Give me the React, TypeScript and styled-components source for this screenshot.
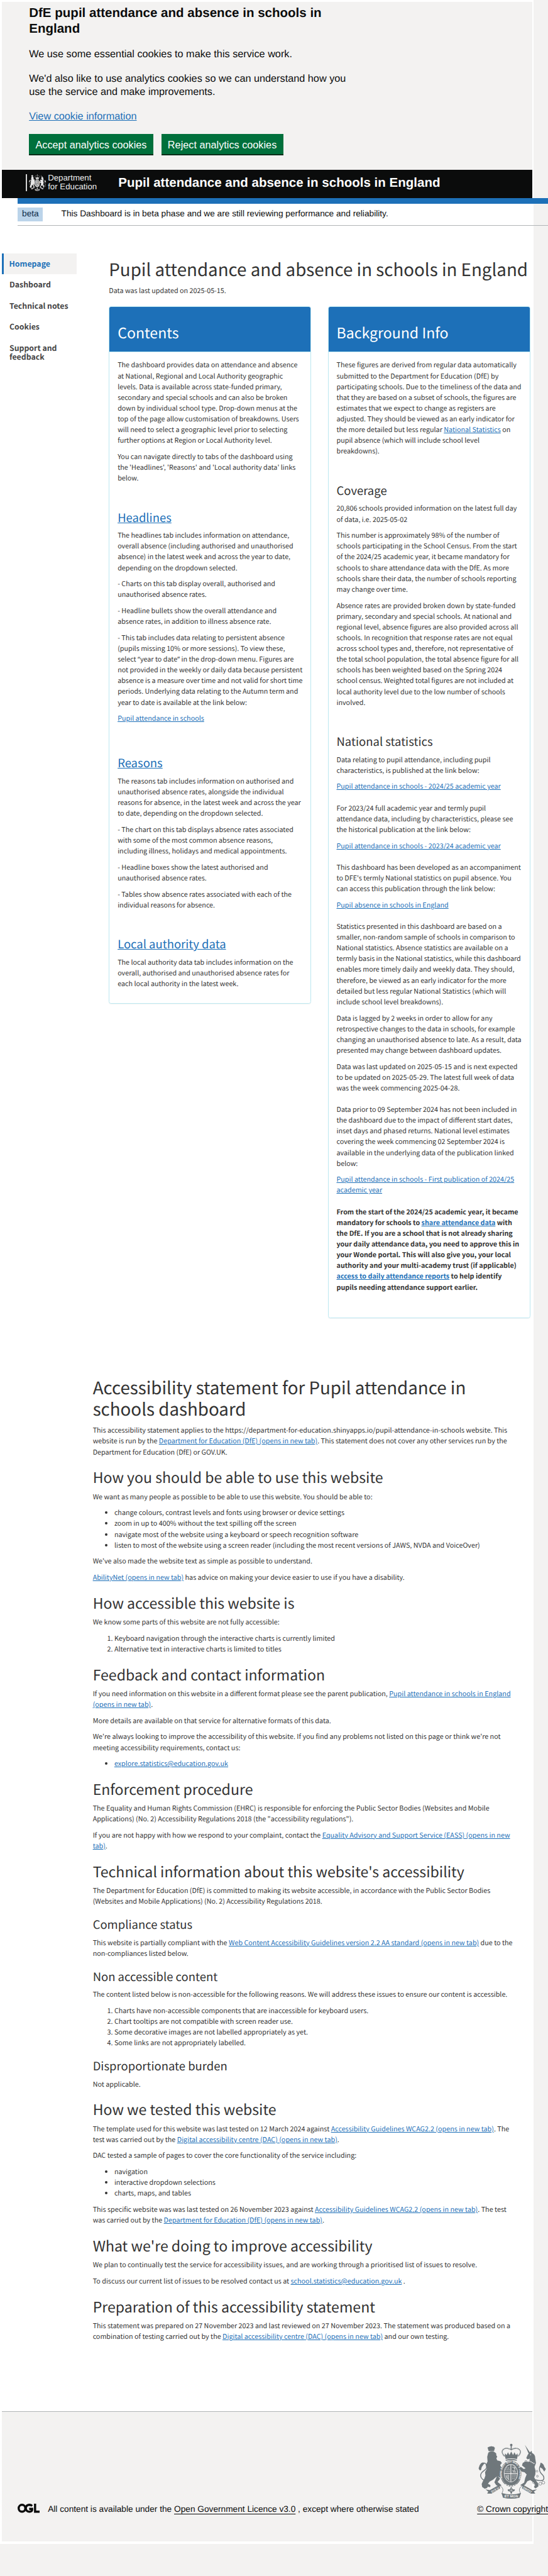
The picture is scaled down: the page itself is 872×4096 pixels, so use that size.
import React, { useId } from 'react';
import styled, { createGlobalStyle, css } from 'styled-components';

const SOURCE = `'Noto Sans CJK SC', 'Noto Sans', sans-serif`;
const ARIAL = `'Liberation Sans', Arial, sans-serif`;
const size = (px: number) => `${(px * 0.009).toFixed(4)}rem`;

// 1rem stands for 100 design units
const GlobalStyle = createGlobalStyle`
  html { font-size: 85.6px; }
  html, body { margin: 0; padding: 0; background: #f3f2f1; overflow-x: hidden; }
  * { box-sizing: border-box; }
`;

const Page = styled.div`
  width: 872px;
  height: 4096px;
  overflow: hidden;
  background: #f3f2f1;
  color: #333333;
  font-family: ${SOURCE};
  font-size: ${size(14)};
  line-height: 0.2rem;
  text-rendering: geometricPrecision;
`;

const Sheet = styled.div`
  width: 9.92rem;
  height: 47.25rem;
  padding: 0.03rem;
  background: #ffffff;
`;

const CookieBanner = styled.section`
  height: 3.12rem;
  padding: 0.06rem 0.51rem 0;
  background: #f3f2f1;
  color: #0b0c0c;
  font: 0.19rem/0.25rem ${ARIAL};
`;

const BannerTitle = styled.h2`
  width: 6rem;
  margin: 0 0 0.2rem;
  font: bold 0.24rem/0.3rem ${ARIAL};
`;

const BannerText = styled.p`
  width: 6rem;
  margin: 0 0 0.2rem;
`;

const Link = styled.a`
  color: #1d70b8;
  text-decoration: underline;
`;

const ButtonRow = styled.div`
  display: flex;
  gap: 0.15rem;
  margin-top: 0.2rem;
`;

const GreenButton = styled.button`
  height: 0.4rem;
  padding: 0 0.12rem 0.01rem;
  border: 0;
  background: #00703c;
  box-shadow: inset 0 -2px 0 #002d18;
  color: #ffffff;
  font: 0.19rem/0.19rem ${ARIAL};
  white-space: nowrap;
`;

const Header = styled.header`
  display: flex;
  height: 0.53rem;
  padding: 0.09rem 0 0 0.45rem;
  background: #0b0c0c;
  color: #ffffff;
`;

const LogoBar = styled.div`
  width: 0.02rem;
  height: 0.31rem;
  margin-right: 0.04rem;
  background: #d5d5d5;
`;

const CrestSvg = styled.svg<{ $w: number; $h: number }>`
  display: block;
  flex: none;
  width: ${(p) => p.$w}rem;
  height: ${(p) => p.$h}rem;
`;

const LogoText = styled.div`
  width: 1.31rem;
  margin: -0.02rem 0 0 0.03rem;
  font: 0.155rem/0.17rem ${ARIAL};
  color: #f0f0f0;
  white-space: nowrap;
`;

const HeaderTitle = styled.div`
  padding-top: 0.01rem;
  font: bold 0.24rem/0.3rem ${ARIAL};
  white-space: nowrap;
`;

const BlueBand = styled.div`
  width: 9.9rem;
  height: 0.1rem;
  margin-left: 0.3rem;
  background: #1d70b8;
`;

const PhaseBanner = styled.div`
  display: flex;
  width: 9.9rem;
  height: 0.41rem;
  margin-left: 0.3rem;
  padding-top: 0.08rem;
  border-bottom: 1px solid #b1b4b6;
  color: #0b0c0c;
  font: 0.16rem/0.24rem ${ARIAL};
`;

const Tag = styled.strong`
  width: 0.47rem;
  height: 0.25rem;
  margin-right: 0.34rem;
  background: #bbd4ea;
  color: #0c2d4a;
  font-weight: 400;
  text-align: center;
`;

const Body = styled.div`
  display: flex;
  height: 21.195rem;
  padding-top: 0.52rem;
`;

const Nav = styled.nav`
  width: 1.39rem;
  margin-right: 0.605rem;
`;

const NavItem = styled.a<{ $active?: boolean }>`
  display: block;
  min-height: 0.38rem;
  margin-bottom: 0.01rem;
  padding: 0.105rem 0.1rem 0.105rem 0.145rem;
  color: #444444;
  font-size: ${size(16)};
  font-weight: 700;
  line-height: 0.17rem;
  ${(p) =>
    p.$active &&
    css`
      padding-left: 0.105rem;
      border-left: 0.04rem solid #1d70b8;
      background: #f3f2f1;
      color: #1d70b8;
    `}
`;

const Main = styled.main`
  width: 7.83rem;
  padding-top: 0.09rem;
`;

const PageTitle = styled.h1`
  margin: 0 0 0.105rem;
  font-size: ${size(36)};
  font-weight: 400;
  line-height: 0.396rem;
  white-space: nowrap;
`;

const H1 = styled.h1`
  margin: 0.19rem 0 0.11rem;
  font-size: ${size(36)};
  font-weight: 400;
  line-height: 0.396rem;
  white-space: nowrap;
`;

const H2 = styled.h2`
  margin: 0.193rem 0 0.107rem;
  font-size: ${size(30)};
  font-weight: 400;
  line-height: 0.33rem;
`;

const H3 = styled.h3`
  margin: 0.196rem 0 0.104rem;
  font-size: ${size(24)};
  font-weight: 400;
  line-height: 0.264rem;
`;

const P = styled.p`
  margin: 0 0 0.1rem;
  white-space: nowrap;
`;

const Notice = styled(P)`
  font-weight: 700;
`;

const Quote = styled.span`
  font-family: 'Noto Sans', sans-serif;
`;

const Gap = styled.div<{ $h: number }>`
  height: ${(p) => p.$h / 100}rem;
`;

const Cards = styled.div`
  display: flex;
  align-items: flex-start;
  gap: 0.31rem;
  margin-top: 0.19rem;
`;

const Card = styled.section`
  width: 3.76rem;
  border: 1px solid #bce8f1;
  border-radius: 0.04rem;
  box-shadow: 0 1px 1px rgba(0, 0, 0, 0.05);
`;

const CardHead = styled.header`
  height: 0.84rem;
  padding: 0.3rem 0.15rem 0;
  border-bottom: 1px solid #bce8f1;
  border-radius: 0.03rem 0.03rem 0 0;
  background: #1d70b8;
  color: #ffffff;
  font-size: ${size(30)};
  line-height: 0.33rem;
`;

const CardBody = styled.div`
  padding: 0.145rem 0.11rem 0.155rem 0.15rem;
`;

const Statement = styled.article`
  width: 7.86rem;
  height: 19.215rem;
  margin-left: 1.695rem;
  ul, ol { margin: 0 0 0.1rem; padding-left: 0.4rem; }
`;

const Footer = styled.footer`
  height: 2.42rem;
  padding-left: 0.3rem;
  border-top: 1px solid #b1b4b6;
  background: #f3f2f1;
  color: #0b0c0c;
  font: 0.16rem/0.2rem ${ARIAL};
  white-space: nowrap;
`;

const FooterRow = styled.div`
  display: flex;
  align-items: flex-end;
  width: 9.9rem;
  height: 1.91rem;
`;

const LicenceText = styled.div`
  width: 7.98rem;
  margin-left: 0.15rem;
`;

const FooterLink = styled.a`
  text-decoration: underline;
  text-underline-offset: 0.03rem;
`;

const Copyright = styled.div`
  width: 1.33rem;
  ${CrestSvg} { margin: 0 0 0.09rem 0.02rem; }
`;

const OglSvg = styled.svg`
  flex: none;
  width: 0.41rem;
  height: 0.17rem;
  margin-bottom: 0.03rem;
`;

const Crest = ({ w, h, color, back }: { w: number; h: number; color: string; back: string }) => {
  const garter = useId();
  return (
    <CrestSvg $w={w} $h={h} viewBox="28 28 378 310" preserveAspectRatio="none" fill={color}>
      {/* crowned lion */}
      <path d="M86 72 L80 52 Q90 44 100 46 L100 42 L104 46 Q116 44 121 54 L116 72 Z" />
      <path d="M84 80 Q100 68 118 76 L128 84 L129 96 L134 103 L129 112 L134 124 L152 128 L160 138 L150 150 L158 164 L150 196 L154 222 L136 212 L126 218 L110 232 L92 242 L82 254 L96 262 L95 273 L80 271 L78 278 L64 282 L50 272 L47 256 L54 240 L62 226 L68 208 L66 190 L76 170 L70 150 L80 130 L78 104 Z" />
      <path d="M134 208 L150 226 L136 244 L146 252 L158 264 L142 270 L128 262 L118 246 Z" />
      <path d="M66 238 Q36 222 42 202 Q46 190 64 178 Q82 164 72 146 Q64 134 54 142 Q38 152 42 176" fill="none" stroke={color} strokeWidth="5" />
      <path d="M64 138 Q48 128 36 150 L30 168 Q34 182 42 178 L48 160 Z" />
      {/* crown */}
      <circle cx="212" cy="38" r="7" />
      <path d="M209 42 h6 v24 h-6 z" />
      <path d="M174 100 Q154 78 166 64 Q182 48 212 64 Q242 48 258 64 Q272 78 250 100" fill="none" stroke={color} strokeWidth="6" strokeDasharray="6 2" />
      <path d="M176 98 L178 84 L186 94 L194 78 L202 94 L212 74 L222 94 L230 78 L238 94 L247 84 L248 98 L244 116 Q212 108 181 116 Z" />
      <path d="M180 120 Q212 112 244 120 L242 126 Q212 118 182 126 Z" />
      {/* shield inside the garter */}
      <ellipse cx="210" cy="197" rx="59" ry="73" />
      <ellipse cx="210" cy="197" rx="54" ry="68" fill="none" stroke={back} strokeWidth="1.5" />
      <ellipse cx="210" cy="195" rx="39" ry="50" fill={back} />
      <ellipse cx="210" cy="195" rx="36" ry="47" />
      <path d="M210 148 v94 M174 197 h72" stroke={back} strokeWidth="4" />
      <g fill="none" stroke={back} strokeWidth="3">
        <path d="M184 166 h20 M180 176 h24 M180 186 h24" strokeDasharray="6 3" />
        <path d="M218 206 h24 M218 216 h22 M218 226 h14" strokeDasharray="6 3" />
        <path d="M218 162 h14 v20 h-14 M226 170 l10 -6 M222 188 h18" />
        <path d="M182 206 Q184 224 202 234 M190 204 v20 M198 204 v26" />
      </g>
      <path id={garter} d="M162 222 Q150 175 180 147 Q212 122 242 150 Q268 180 252 230" fill="none" />
      <text fontFamily={ARIAL} fontSize="15" fontWeight="700" fill={back}>
        <textPath href={`#${garter}`} textLength="232">HONI SOIT QUI MAL Y PENSE</textPath>
      </text>
      <path d="M178 258 Q210 276 244 258" fill="none" stroke={back} strokeWidth="5" strokeDasharray="8 7" />
      {/* unicorn */}
      <path d="M288 37 L318 82 L310 88 Z" />
      <path d="M314 80 L326 70 L328 82 Q346 90 346 112 L350 138 L342 160 L348 182 L346 204 L340 218 L350 236 L362 252 L364 268 L348 280 L338 272 L346 262 L336 246 L318 234 L302 240 L290 258 L276 268 L262 262 L284 248 L290 222 L298 202 L286 190 L270 186 L256 168 L266 160 L282 172 L292 168 L272 152 L276 138 L290 130 L310 132 L316 114 L302 118 L296 110 L304 92 Z" />
      <path d="M304 122 L342 142" stroke={back} strokeWidth="5" strokeDasharray="6 3" />
      <circle cx="320" cy="92" r="2.5" fill={back} />
      <path d="M346 232 Q390 244 394 226 Q396 212 382 200 Q366 184 370 164 Q376 142 390 158" fill="none" stroke={color} strokeWidth="5" />
      <path d="M376 136 Q394 142 396 158 L405 172 L396 186 L386 170 L370 160 Z" />
      <g fill="none" stroke={color} strokeWidth="2.5">
        <circle cx="294" cy="130" r="6" />
        <circle cx="356" cy="184" r="5" />
        <circle cx="358" cy="212" r="5" />
        <circle cx="337" cy="247" r="6" />
        <circle cx="350" cy="261" r="7" />
        <circle cx="374" cy="254" r="8" />
        <circle cx="391" cy="248" r="8" />
      </g>
      {/* motto ribbon and plant */}
      <path d="M68 286 L92 290 L146 260 L150 280 L102 309 L78 309 L84 298 Z" />
      <path d="M356 286 L330 290 L278 260 L272 280 L322 309 L346 309 L338 298 Z" />
      <path d="M150 266 Q174 280 162 304 L160 312 M274 266 Q248 280 262 304 L264 312" fill="none" stroke={color} strokeWidth="3" />
      <path d="M158 306 Q212 322 266 306 L258 332 Q212 343 166 332 Z" />
      <path d="M212 270 L220 286 L232 286 Q234 298 218 298 L215 310 H209 L206 298 Q190 298 193 286 L204 286 Z" />
      <path d="M212 278 v20 M202 292 h20" stroke={back} strokeWidth="2" />
      <g fontFamily={ARIAL} fontSize="19" fontWeight="700" fill={back}>
        <text x="174" y="332" textLength="76">ET MON</text>
        <text transform="translate(104 306) rotate(-31)" fontSize="17" textLength="48">DIEU</text>
        <text transform="translate(276 280) rotate(31)" fontSize="17" textLength="54">DROIT</text>
      </g>
    </CrestSvg>
  );
};

const OglMark = () => (
  <OglSvg viewBox="0 0 41 17">
    <g fill="none" stroke="#0b0c0c" strokeWidth="4">
      <ellipse cx="8.2" cy="8.5" rx="6.2" ry="6.5" />
      <path d="M27 4.2 Q25 2 21.5 2 Q15.5 2.5 15.3 8.5 Q15.5 14.5 21.5 15 Q26 15 27 12 V9.6 H21.5" />
      <path d="M32.5 0 V15 H41" />
    </g>
  </OglSvg>
);

export default function App() {
  return (
    <>
      <GlobalStyle />
      <Page>
        <Sheet>
          <CookieBanner>
            <BannerTitle>DfE pupil attendance and absence in schools in England</BannerTitle>
            <BannerText>We use some essential cookies to make this service work.</BannerText>
            <BannerText>We'd also like to use analytics cookies so we can understand how you use the service and make improvements.</BannerText>
            <Link>View cookie information</Link>
            <ButtonRow>
              <GreenButton>Accept analytics cookies</GreenButton>
              <GreenButton>Reject analytics cookies</GreenButton>
            </ButtonRow>
          </CookieBanner>
          <Header>
            <LogoBar />
            <Crest w={0.32} h={0.31} color="#e8e8e8" back="#0b0c0c" />
            <LogoText>Department<br />for Education</LogoText>
            <HeaderTitle>Pupil attendance and absence in schools in England</HeaderTitle>
          </Header>
          <BlueBand />
          <PhaseBanner>
            <Tag>beta</Tag>
            <span>This Dashboard is in beta phase and we are still reviewing performance and reliability.</span>
          </PhaseBanner>
          <Body>
            <Nav>
              <NavItem $active>Homepage</NavItem>
              <NavItem>Dashboard</NavItem>
              <NavItem>Technical notes</NavItem>
              <NavItem>Cookies</NavItem>
              <NavItem>Support and<br />feedback</NavItem>
            </Nav>
            <Main>
              <PageTitle>Pupil attendance and absence in schools in England</PageTitle>
              <P>Data was last updated on 2025-05-15.</P>
              <Cards>
                <Card>
                  <CardHead>Contents</CardHead>
                  <CardBody>
                    <P>
                      The dashboard provides data on attendance and absence<br />
                      at National, Regional and Local Authority geographic<br />
                      levels. Data is available across state-funded primary,<br />
                      secondary and special schools and can also be broken<br />
                      down by individual school type. Drop-down menus at the<br />
                      top of the page allow customisation of breakdowns. Users<br />
                      will need to select a geographic level prior to selecting<br />
                      further options at Region or Local Authority level.
                    </P>
                    <P>
                      You can navigate directly to tabs of the dashboard using<br />
                      the 'Headlines', 'Reasons' and 'Local authority data' links<br />
                      below.
                    </P>
                    <Gap $h={20} />
                    <H3><Link>Headlines</Link></H3>
                    <P>
                      The headlines tab includes information on attendance,<br />
                      overall absence (including authorised and unauthorised<br />
                      absence) in the latest week and across the year to date,<br />
                      depending on the dropdown selected.
                    </P>
                    <P>
                      - Charts on this tab display overall, authorised and<br />
                      unauthorised absence rates.
                    </P>
                    <P>
                      - Headline bullets show the overall attendance and<br />
                      absence rates, in addition to illness absence rate.
                    </P>
                    <P>
                      - This tab includes data relating to persistent absence<br />
                      (pupils missing 10% or more sessions). To view these,<br />
                      select <Quote>“</Quote>year to date<Quote>”</Quote> in the drop-down menu. Figures are<br />
                      not provided in the weekly or daily data because persistent<br />
                      absence is a measure over time and not valid for short time<br />
                      periods. Underlying data relating to the Autumn term and<br />
                      year to date is available at the link below:
                    </P>
                    <P><Link>Pupil attendance in schools</Link></P>
                    <Gap $h={30} />
                    <H3><Link>Reasons</Link></H3>
                    <P>
                      The reasons tab includes information on authorised and<br />
                      unauthorised absence rates, alongside the individual<br />
                      reasons for absence, in the latest week and across the year<br />
                      to date, depending on the dropdown selected.
                    </P>
                    <P>
                      - The chart on this tab displays absence rates associated<br />
                      with some of the most common absence reasons,<br />
                      including illness, holidays and medical appointments.
                    </P>
                    <P>
                      - Headline boxes show the latest authorised and<br />
                      unauthorised absence rates.
                    </P>
                    <P>
                      - Tables show absence rates associated with each of the<br />
                      individual reasons for absence.
                    </P>
                    <Gap $h={20} />
                    <H3><Link>Local authority data</Link></H3>
                    <P>
                      The local authority data tab includes information on the<br />
                      overall, authorised and unauthorised absence rates for<br />
                      each local authority in the latest week.
                    </P>
                  </CardBody>
                </Card>
                <Card>
                  <CardHead>Background Info</CardHead>
                  <CardBody>
                    <P>
                      These figures are derived from regular data automatically<br />
                      submitted to the Department for Education (DfE) by<br />
                      participating schools. Due to the timeliness of the data and<br />
                      that they are based on a subset of schools, the figures are<br />
                      estimates that we expect to change as registers are<br />
                      adjusted. They should be viewed as an early indicator for<br />
                      the more detailed but less regular <Link>National Statistics</Link> on<br />
                      pupil absence (which will include school level<br />
                      breakdowns).
                    </P>
                    <Gap $h={20} />
                    <H3>Coverage</H3>
                    <P>
                      20,806 schools provided information on the latest full day<br />
                      of data, i.e. 2025-05-02
                    </P>
                    <P>
                      This number is approximately 98% of the number of<br />
                      schools participating in the School Census. From the start<br />
                      of the 2024/25 academic year, it became mandatory for<br />
                      schools to share attendance data with the DfE. As more<br />
                      schools share their data, the number of schools reporting<br />
                      may change over time.
                    </P>
                    <P>
                      Absence rates are provided broken down by state-funded<br />
                      primary, secondary and special schools. At national and<br />
                      regional level, absence figures are also provided across all<br />
                      schools. In recognition that response rates are not equal<br />
                      across school types and, therefore, not representative of<br />
                      the total school population, the total absence figure for all<br />
                      schools has been weighted based on the Spring 2024<br />
                      school census. Weighted total figures are not included at<br />
                      local authority level due to the low number of schools<br />
                      involved.
                    </P>
                    <Gap $h={20} />
                    <H3>National statistics</H3>
                    <P>
                      Data relating to pupil attendance, including pupil<br />
                      characteristics, is published at the link below:
                    </P>
                    <P><Link>Pupil attendance in schools - 2024/25 academic year</Link></P>
                    <Gap $h={10} />
                    <P>
                      For 2023/24 full academic year and termly pupil<br />
                      attendance data, including by characteristics, please see<br />
                      the historical publication at the link below:
                    </P>
                    <P><Link>Pupil attendance in schools - 2023/24 academic year</Link></P>
                    <Gap $h={10} />
                    <P>
                      This dashboard has been developed as an accompaniment<br />
                      to DFE's termly National statistics on pupil absence. You<br />
                      can access this publication through the link below:
                    </P>
                    <P><Link>Pupil absence in schools in England</Link></P>
                    <Gap $h={10} />
                    <P>
                      Statistics presented in this dashboard are based on a<br />
                      smaller, non-random sample of schools in comparison to<br />
                      National statistics. Absence statistics are available on a<br />
                      termly basis in the National statistics, while this dashboard<br />
                      enables more timely daily and weekly data. They should,<br />
                      therefore, be viewed as an early indicator for the more<br />
                      detailed but less regular National Statistics (which will<br />
                      include school level breakdowns).
                    </P>
                    <P>
                      Data is lagged by 2 weeks in order to allow for any<br />
                      retrospective changes to the data in schools, for example<br />
                      changing an unauthorised absence to late. As a result, data<br />
                      presented may change between dashboard updates.
                    </P>
                    <P>
                      Data was last updated on 2025-05-15 and is next expected<br />
                      to be updated on 2025-05-29. The latest full week of data<br />
                      was the week commencing 2025-04-28.
                    </P>
                    <Gap $h={10} />
                    <P>
                      Data prior to 09 September 2024 has not been included in<br />
                      the dashboard due to the impact of different start dates,<br />
                      inset days and phased returns. National level estimates<br />
                      covering the week commencing 02 September 2024 is<br />
                      available in the underlying data of the publication linked<br />
                      below:
                    </P>
                    <P><Link>Pupil attendance in schools - First publication of 2024/25<br />academic year</Link></P>
                    <Gap $h={10} />
                    <Notice>
                      From the start of the 2024/25 academic year, it became<br />
                      mandatory for schools to <Link>share attendance data</Link> with<br />
                      the DfE. If you are a school that is not already sharing<br />
                      your daily attendance data, you need to approve this in<br />
                      your Wonde portal. This will also give you, your local<br />
                      authority and your multi-academy trust (if applicable)<br />
                      <Link>access to daily attendance reports</Link> to help identify<br />
                      pupils needing attendance support earlier.
                    </Notice>
                    <Gap $h={20} />
                  </CardBody>
                </Card>
              </Cards>
            </Main>
          </Body>
          <Statement>
            <H1>Accessibility statement for Pupil attendance in<br />schools dashboard</H1>
            <P>
              This accessibility statement applies to the https://department-for-education.shinyapps.io/pupil-attendance-in-schools website. This<br />
              website is run by the <Link>Department for Education (DfE) (opens in new tab)</Link>. This statement does not cover any other services run by the<br />
              Department for Education (DfE) or GOV.UK.
            </P>
            <H2>How you should be able to use this website</H2>
            <P>We want as many people as possible to be able to use this website. You should be able to:</P>
            <ul>
              <li>change colours, contrast levels and fonts using browser or device settings</li>
              <li>zoom in up to 400% without the text spilling off the screen</li>
              <li>navigate most of the website using a keyboard or speech recognition software</li>
              <li>listen to most of the website using a screen reader (including the most recent versions of JAWS, NVDA and VoiceOver)</li>
            </ul>
            <P>We've also made the website text as simple as possible to understand.</P>
            <P><Link>AbilityNet (opens in new tab)</Link> has advice on making your device easier to use if you have a disability.</P>
            <H2>How accessible this website is</H2>
            <P>We know some parts of this website are not fully accessible:</P>
            <ol>
              <li>Keyboard navigation through the interactive charts is currently limited</li>
              <li>Alternative text in interactive charts is limited to titles</li>
            </ol>
            <H2>Feedback and contact information</H2>
            <P>
              If you need information on this website in a different format please see the parent publication, <Link>Pupil attendance in schools in England<br />
              (opens in new tab)</Link>.
            </P>
            <P>More details are available on that service for alternative formats of this data.</P>
            <P>
              We're always looking to improve the accessibility of this website. If you find any problems not listed on this page or think we're not<br />
              meeting accessibility requirements, contact us:
            </P>
            <ul>
              <li><Link>explore.statistics@education.gov.uk</Link></li>
            </ul>
            <H2>Enforcement procedure</H2>
            <P>
              The Equality and Human Rights Commission (EHRC) is responsible for enforcing the Public Sector Bodies (Websites and Mobile<br />
              Applications) (No. 2) Accessibility Regulations 2018 (the "accessibility regulations").
            </P>
            <P>
              If you are not happy with how we respond to your complaint, contact the <Link>Equality Advisory and Support Service (EASS) (opens in new<br />
              tab)</Link>.
            </P>
            <H2>Technical information about this website's accessibility</H2>
            <P>
              The Department for Education (DfE) is committed to making its website accessible, in accordance with the Public Sector Bodies<br />
              (Websites and Mobile Applications) (No. 2) Accessibility Regulations 2018.
            </P>
            <H3>Compliance status</H3>
            <P>
              This website is partially compliant with the <Link>Web Content Accessibility Guidelines version 2.2 AA standard (opens in new tab)</Link> due to the<br />
              non-compliances listed below.
            </P>
            <H3>Non accessible content</H3>
            <P>The content listed below is non-accessible for the following reasons. We will address these issues to ensure our content is accessible.</P>
            <ol>
              <li>Charts have non-accessible components that are inaccessible for keyboard users.</li>
              <li>Chart tooltips are not compatible with screen reader use.</li>
              <li>Some decorative images are not labelled appropriately as yet.</li>
              <li>Some links are not appropriately labelled.</li>
            </ol>
            <H3>Disproportionate burden</H3>
            <P>Not applicable.</P>
            <H2>How we tested this website</H2>
            <P>
              The template used for this website was last tested on 12 March 2024 against <Link>Accessibility Guidelines WCAG2.2 (opens in new tab)</Link>. The<br />
              test was carried out by the <Link>Digital accessibility centre (DAC) (opens in new tab)</Link>.
            </P>
            <P>DAC tested a sample of pages to cover the core functionality of the service including:</P>
            <ul>
              <li>navigation</li>
              <li>interactive dropdown selections</li>
              <li>charts, maps, and tables</li>
            </ul>
            <P>
              This specific website was was last tested on 26 November 2023 against <Link>Accessibility Guidelines WCAG2.2 (opens in new tab)</Link>. The test<br />
              was carried out by the <Link>Department for Education (DfE) (opens in new tab)</Link>.
            </P>
            <H2>What we're doing to improve accessibility</H2>
            <P>We plan to continually test the service for accessibility issues, and are working through a prioritised list of issues to resolve.</P>
            <P>To discuss our current list of issues to be resolved contact us at <Link>school.statistics@education.gov.uk</Link> .</P>
            <H2>Preparation of this accessibility statement</H2>
            <P>
              This statement was prepared on 27 November 2023 and last reviewed on 27 November 2023. The statement was produced based on a<br />
              combination of testing carried out by the <Link>Digital accessibility centre (DAC) (opens in new tab)</Link> and our own testing.
            </P>
          </Statement>
          <Footer>
            <FooterRow>
              <OglMark />
              <LicenceText>
                All content is available under the <FooterLink>Open Government Licence v3.0</FooterLink> , except where otherwise stated
              </LicenceText>
              <Copyright>
                <Crest w={1.26} h={1.03} color="#6f777b" back="#f3f2f1" />
                <FooterLink>© Crown copyright</FooterLink>
              </Copyright>
            </FooterRow>
          </Footer>
        </Sheet>
      </Page>
    </>
  );
}
